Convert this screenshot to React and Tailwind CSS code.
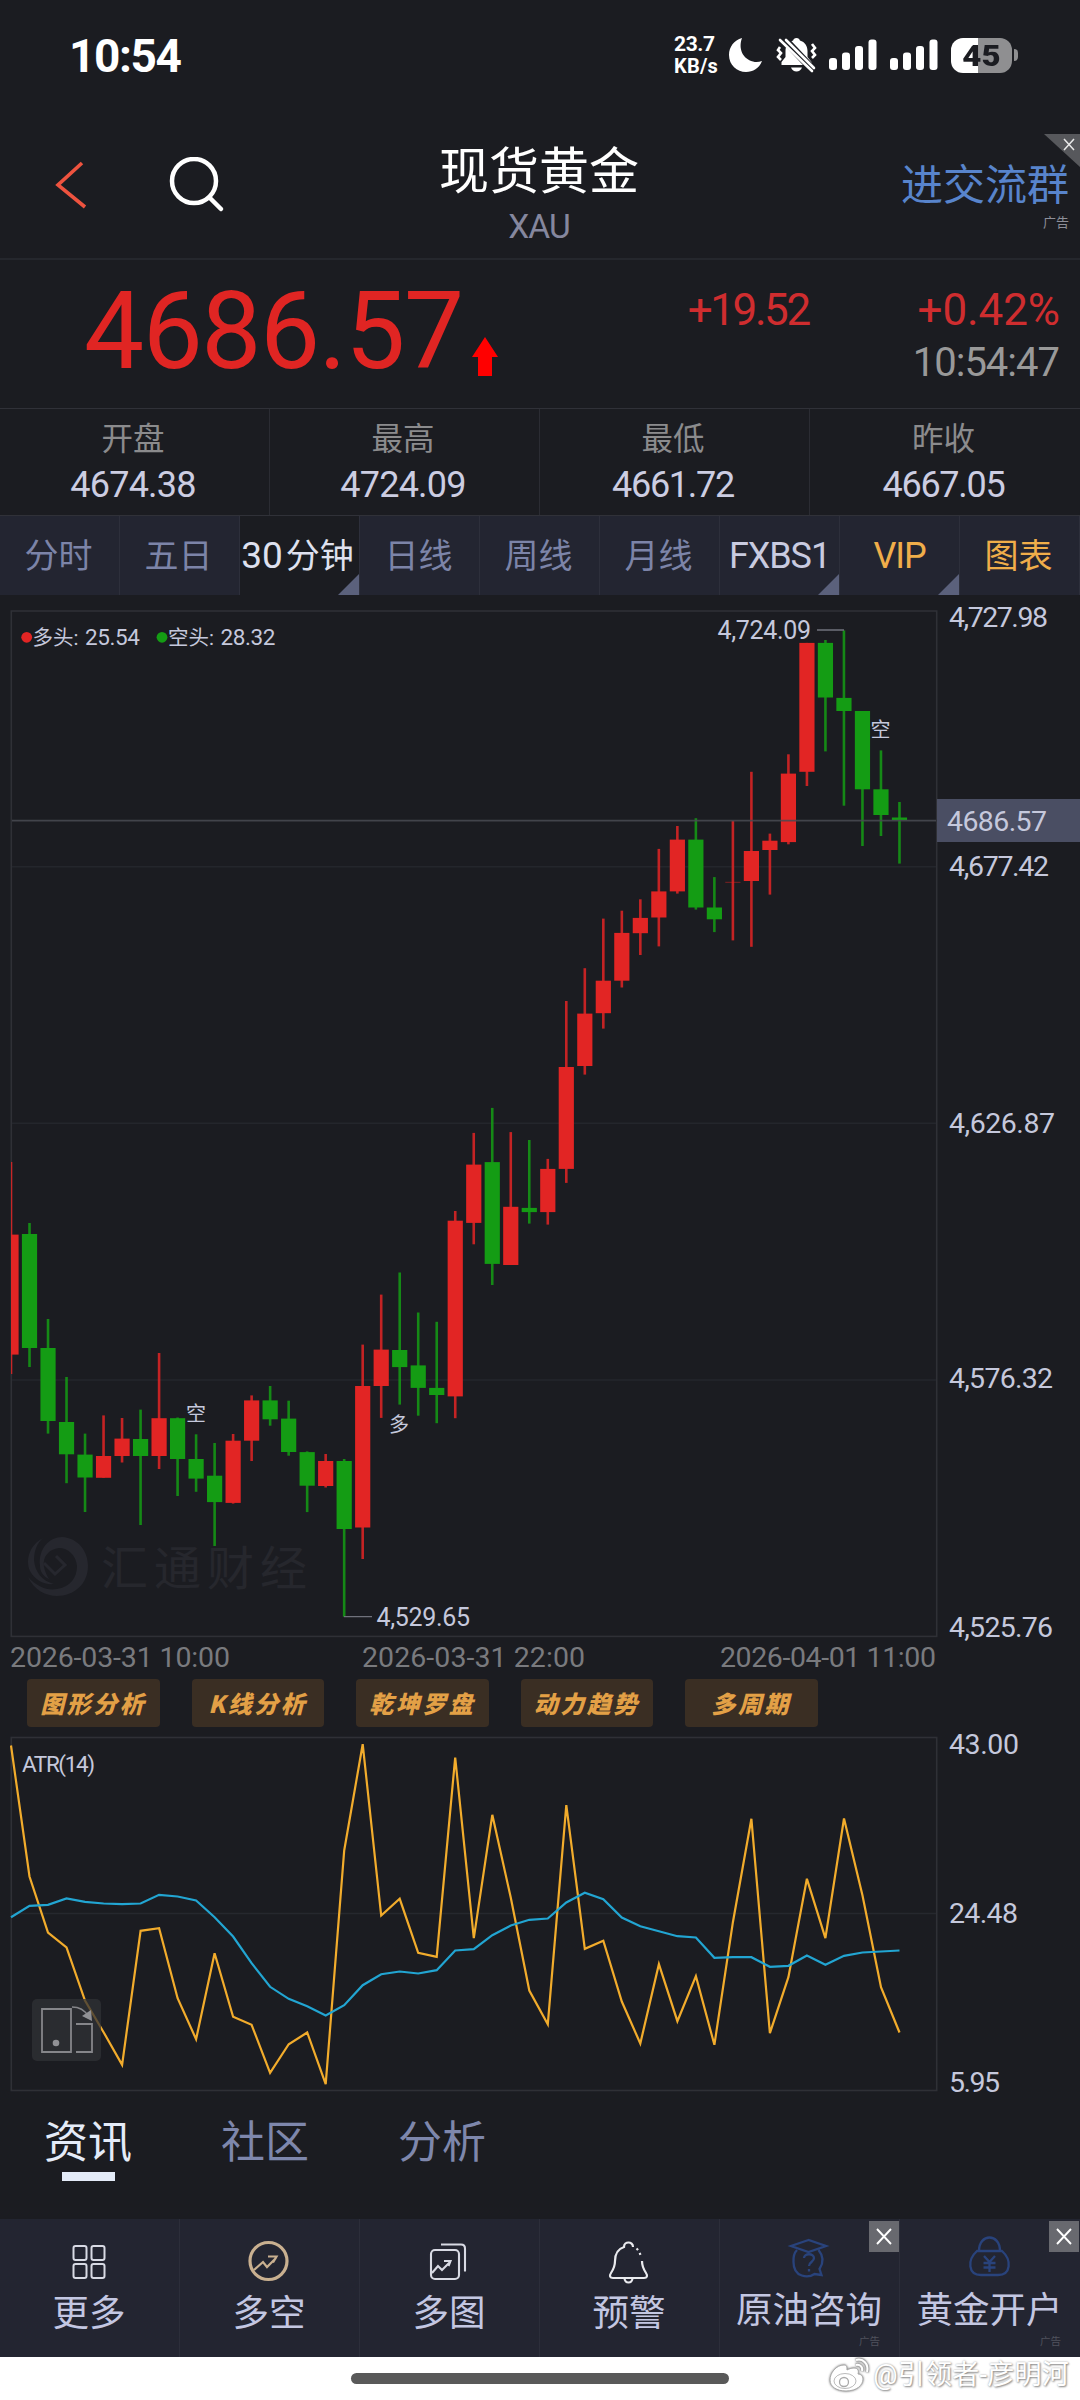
import React from "react";

const FONT = "font-[Roboto,'Noto_Sans_CJK_SC',sans-serif]";
const RED = "#e22524";
const GREEN = "#149c14";
const STEP = 18.51;
const ORIGIN = 11;
const CHART_TOP = 595;

// Each candle: [direction, high, body top, body bottom, low]
const CANDLES = [
  ["r", 1162, 1234.6, 1354.6, 1374], ["g", 1223, 1234, 1348, 1367], ["g", 1319, 1348, 1421, 1433.6],
  ["g", 1377, 1422, 1454.3, 1483.2], ["g", 1433.6, 1454.6, 1477.5, 1512], ["r", 1415.4, 1456, 1477.8, 1477.8],
  ["r", 1418, 1438.6, 1456, 1462.5], ["g", 1409.6, 1439, 1456, 1525], ["r", 1353, 1418.2, 1456, 1469],
  ["g", 1417.5, 1418.2, 1459, 1496], ["g", 1434.3, 1459, 1478.6, 1491.8], ["g", 1443, 1475.7, 1502.1, 1546],
  ["r", 1434, 1440.7, 1502.9, 1503.6], ["r", 1395.4, 1400.4, 1440.7, 1461], ["g", 1386, 1400.4, 1419.3, 1425.7],
  ["g", 1400.7, 1418.6, 1452, 1455.7], ["g", 1451.4, 1452.1, 1485.7, 1512.1], ["r", 1454, 1461, 1486, 1487.5],
  ["g", 1459, 1461, 1529, 1616.8], ["r", 1344.6, 1386, 1527.5, 1559], ["r", 1294.6, 1349.6, 1386, 1417.9],
  ["g", 1272.5, 1350, 1367.1, 1404.6], ["g", 1312.5, 1365.4, 1387.9, 1415.7], ["g", 1321.8, 1387.9, 1395, 1423.2],
  ["r", 1211, 1220.7, 1396.4, 1418.2], ["r", 1132.9, 1164.6, 1222.9, 1244.3], ["g", 1107.9, 1162.1, 1263.9, 1285],
  ["r", 1132.1, 1206.8, 1265, 1265], ["g", 1140, 1207.9, 1212.1, 1223.6], ["r", 1158.9, 1168.9, 1212.1, 1224.6],
  ["r", 1001, 1067, 1168.9, 1182.9], ["r", 968.2, 1013.6, 1066, 1074.6], ["r", 918.6, 980.7, 1013.2, 1028.6],
  ["r", 910.7, 932.9, 980.7, 987.5], ["r", 899.3, 917.9, 933.2, 955], ["r", 848.9, 891.4, 917.5, 946.4],
  ["r", 826, 839.6, 891.4, 893.6], ["g", 818.2, 839.6, 907.5, 909.6], ["g", 877.1, 907.5, 919.3, 932.1],
  ["r", 820.7, 881.8, 882.6, 940.4], ["r", 771.8, 851, 881, 946.8], ["r", 833.6, 840.7, 850, 894.6],
  ["r", 754.3, 773.6, 842.1, 844.3], ["r", 642.9, 642.9, 771.8, 786], ["g", 640, 642.9, 697.5, 751.4],
  ["g", 630.4, 697.9, 711, 805.7], ["g", 711, 711, 789.3, 846], ["g", 750.4, 789.3, 815, 836],
  ["g", 802, 817.5, 820, 863.6],
];

// Indicator series, three units to the pixel, measured from above the panel
const TRUE_RANGE = [
  375, 768, 936, 981, 1140, 1235, 1333, 931, 923, 1133, 1256, 998, 1189, 1213, 1357, 1271, 1236, 1391, 690, 371,
  885, 835, 997, 1009, 411, 953, 583, 832, 1110, 1211, 554, 985, 961, 1143, 1269, 1031, 1202, 1067, 1273, 905,
  595, 1238, 1070, 775, 953, 594, 825, 1100, 1236,
];
const ATR = [
  890, 856, 853, 834, 844, 849, 851, 849, 823, 828, 840, 890, 948, 1028, 1099, 1135, 1157, 1185, 1154, 1094,
  1061, 1053, 1059, 1049, 990, 986, 944, 915, 898, 894, 846, 817, 836, 891, 917, 932, 947, 951, 1012, 1010,
  1010, 1039, 1036, 1005, 1033, 1006, 996, 993, 990,
];

const toPoints = (s) => s.map((v, i) => `${(ORIGIN + i * STEP).toFixed(1)},${(v / 3 - 117).toFixed(1)}`).join(" ");

function Label({ x, y, size = 28.5, w, fill = "#c5c8dc", children }) {
  return (
    <text x={x} y={y + size * 0.355} fontSize={size} fill={fill} textLength={w} lengthAdjust="spacing">
      {children}
    </text>
  );
}

function Signal() {
  return (
    <svg width="48" height="32" viewBox="0 0 48 32" fill="#fff">
      <rect x="0" y="19" width="8" height="12" rx="3" />
      <rect x="13" y="13.500" width="8" height="17.500" rx="3" />
      <rect x="26" y="7" width="8" height="24" rx="3" />
      <rect x="39.500" y="0.500" width="8" height="30.500" rx="3" />
    </svg>
  );
}

function StatusBar() {
  return (
    <div className="flex h-[110px] items-center pl-[69px] pr-[62px]">
      <div className="flex-1 pt-[2px] text-[46px] font-bold tracking-[-0.03em] text-white">10:54</div>
      <div className="w-[43px] text-[21px] font-bold leading-[22px] tracking-[-0.02em] text-white">
        <div>23.7</div>
        <div className="text-[20px] tracking-[0.01em]">KB/s</div>
      </div>
      <svg className="ml-[12px]" width="34" height="36" viewBox="0 0 34 36">
        <path d="M13 1C5 3 0 10 0 18c0 10 8 17 17 17 7 0 13-3.500 16-11-3 1-6 1.500-9 .5C14 22 9 12 13 1z" fill="#fff" />
      </svg>
      <svg className="ml-[13px]" width="41" height="36" viewBox="0 0 41 36">
        <path d="M20.500 1c-2 0-3 1-3.400 2.500C12 5 9.500 9 9.500 14v6l-4 5v3h30v-3l-4-5v-6c0-5-2.500-9-7.600-10.500C23.500 2 22.500 1 20.500 1zM15 30.500h11c-1 2.500-3 4-5.500 4s-4.500-1.500-5.500-4z" fill="#fff" />
        <path d="m4 10-2 3 3 3-3 4 3 3M36 7l3 4-3 3 3 4-3 3" fill="none" stroke="#fff" strokeWidth="2.600" />
        <path d="M7 1l32 34" stroke="#1b1c21" strokeWidth="8" />
        <path d="M4 3l32 31M10 3l28 28" stroke="#fff" strokeWidth="2.600" strokeLinecap="round" />
      </svg>
      <div className="ml-[12px] flex gap-[13px]"><Signal /><Signal /></div>
      <div className="ml-[13px] flex h-[35px] w-[61px] items-center justify-center rounded-[12px] bg-[linear-gradient(to_right,#fff_45%,#8f8f91_45%)] pt-px text-[30px] font-black text-[#1b1c21]">
        <span className="scale-x-110">45</span>
      </div>
      <div className="ml-[2px] h-[12px] w-[4px] rounded-r-full bg-[#8f8f91]" />
    </div>
  );
}

function Header() {
  return (
    <div className="relative flex h-[150px] border-b-2 border-[#25272d]">
      <div className="flex w-[330px] pt-[47px] pl-[54px]">
        <svg width="34" height="54" viewBox="0 0 34 54" fill="none">
          <path d="M28 6 4 28l27 22" stroke="#ee533f" strokeWidth="3.600" />
        </svg>
        <svg className="ml-[81px]" width="56" height="56" viewBox="0 0 56 56" fill="none" stroke="#fff" strokeWidth="4.500" strokeLinecap="round">
          <circle cx="25" cy="24" r="22" />
          <path d="m41 41 11 11" />
        </svg>
      </div>
      <div className="flex w-[420px] flex-col items-center pt-[32px] pr-[2px]">
        <div className="text-[50px] leading-[60px] text-white">现货黄金</div>
        <div className="mt-[5px] text-[33.500px] leading-[40px] tracking-[-0.03em] text-[#85879e]">XAU</div>
      </div>
      <div className="flex w-[330px] flex-col items-end pt-[51px] pr-[11px]">
        <div className="text-[42px] leading-[50px] text-[#5884cc]">进交流群</div>
        <div className="mt-[4px] text-[13px] leading-[16px] text-[#8d8e98]">广告</div>
      </div>
      <svg className="absolute right-0 top-[24px]" width="36" height="34" viewBox="0 0 36 34">
        <path d="M0 0h36v33z" fill="#57585c" />
        <path d="m20 5 10 11M30 5 20 16" stroke="#e8e8e8" strokeWidth="1.500" />
      </svg>
    </div>
  );
}

function Quote() {
  return (
    <div className="flex h-[148px] pl-[84px] pr-[21px]">
      <div className="pt-[14px] text-[107px] leading-[116px] tracking-[-0.014em] text-[#e02523]">4686.57</div>
      <svg className="ml-[9px] mt-[77px]" width="26" height="40" viewBox="0 0 26 40">
        <path d="M13 0 0 20h6v19h14V20h6z" fill="#ff0000" />
      </svg>
      <div className="flex flex-1 justify-end pt-[22px] text-[44px] leading-[56px] text-[#cf2d2f]">
        <div className="mr-[104px] tracking-[-0.055em]">+19.52</div>
        <div className="text-right">
          <div className="-mr-px tracking-[-0.002em]">+0.42%</div>
          <div className="text-[40px] leading-[50px] tracking-[-0.025em] text-[#999]">10:54:47</div>
        </div>
      </div>
    </div>
  );
}

function Stats() {
  const rows = [["开盘", "4674.38"], ["最高", "4724.09"], ["最低", "4661.72"], ["昨收", "4667.05"]];
  return (
    <div className="grid h-[108px] grid-cols-4 border-y border-[#303138]">
      {rows.map(([k, v], i) => (
        <div key={k} className={`flex flex-col items-center pt-[9px] pr-[3px] ${i < 3 ? "border-r border-[#2b2c33]" : ""}`}>
          <div className="text-[31.500px] leading-[44px] text-[#8b8b8d]">{k}</div>
          <div className={`text-[36px] leading-[46px] text-[#cccde2] ${i < 2 ? "tracking-[-0.022em]" : "tracking-[-0.035em]"}`}>{v}</div>
        </div>
      ))}
    </div>
  );
}

function Periods() {
  const tabs = [
    ["分时", "text-[#7c84a8]"], ["五日", "text-[#7c84a8]"], ["30分钟", "text-[#dfe1ef]", true], ["日线", "text-[#7c84a8]"],
    ["周线", "text-[#7c84a8]"], ["月线", "text-[#7c84a8]"], ["FXBS1", "text-[#c9cbe0]", true], ["VIP", "text-[#f0ae4a]", true], ["图表", "text-[#f0ae4a]"],
  ];
  return (
    <div className="grid h-[79px] grid-cols-9">
      {tabs.map(([name, color, more], i) => (
        <div key={name} className={`relative flex items-center justify-center whitespace-nowrap border-r border-[#2d2f3b] pt-px text-[34px] ${color} ${i === 2 ? "bg-[#1b1c21]" : "bg-[#232531]"}`}>
          <span className={i === 2 ? "-ml-[4px] text-[37px]" : i > 5 && i < 8 ? "text-[36px] tracking-[-0.03em]" : "-ml-[2px]"}>
            {i === 2 ? <>30<span className="ml-[3px] text-[34px]">分钟</span></> : name}
          </span>
          {more && (
            <svg className="absolute bottom-0 right-0" width="21" height="21" viewBox="0 0 21 21">
              <path d="M21 0v21H0z" fill="#5b617c" />
            </svg>
          )}
        </div>
      ))}
    </div>
  );
}

function Candles() {
  return (
    <svg className="block" width="1080" height="1084" viewBox={`0 ${CHART_TOP} 1080 1084`}>
      <defs><clipPath id="plot"><rect x="11" y="611" width="926" height="1026" /></clipPath></defs>
      <path d="M12 866.800H936M12 1123.200H936M12 1380H936" stroke="#24262c" strokeWidth="1.500" />
      <rect x="11.300" y="611" width="925.400" height="1025.400" fill="none" stroke="#2f3036" strokeWidth="1.600" />
      <g fill="#26272e">
        <path d="M40 1566C38 1548 50 1537 62 1537c16 1 26 14 26 29 0 18-14 30-31 30-11 0-23-6-29-19 9 10 20 14 29 12 13-2 20-11 20-23-1-11-9-18-18-18-10 1-17 9-15 19 1 5 3 9 5 12-5-2-9-7-9-13z" />
        <path d="M43 1538c-13 7-18 21-13 33 5 9 14 14 24 13-12-3-19-12-20-24 0-9 3-17 9-22z" />
        <path d="m56 1556 9 9-10 9-11-11" fill="none" stroke="#26272e" strokeWidth="3" />
        <text x="101" y="1585" fontSize="47" letterSpacing="6" fill="#26272d">汇通财经</text>
      </g>
      <g clipPath="url(#plot)">
        {CANDLES.map(([d, hi, top, bot, lo], i) => {
          const x = ORIGIN + i * STEP;
          const c = d === "r" ? RED : GREEN;
          return (
            <g key={i} fill={c}>
              <rect x={x - 1.3} y={hi} width="2.6" height={lo - hi} opacity="0.85" />
              <rect x={x - 7.6} y={top} width="15.2" height={Math.max(bot - top, 1)} opacity={bot - top < 1 ? 0.5 : 1} />
            </g>
          );
        })}
      </g>
      <path d="M12 820.700H936" stroke="#494b53" strokeWidth="1.800" opacity=".85" />
      <path d="M817 630H844M344 1616.600H372" stroke="#70727c" strokeWidth="1.300" />
      <circle cx="26.700" cy="637.300" r="5.400" fill={RED} />
      <circle cx="162" cy="637.300" r="5.400" fill={GREEN} />
      <Label x={32.500} y={637.500} size={20.500}>多头:</Label>
      <Label x={85} y={637} size={22.500} w={55}>25.54</Label>
      <Label x={168} y={637.500} size={20.500}>空头:</Label>
      <Label x={220.500} y={637} size={22.500} w={55}>28.32</Label>
      <Label x={717.500} y={630.500} size={25} w={93.500}>4,724.09</Label>
      <Label x={376.500} y={1617.500} size={25} w={93.500}>4,529.65</Label>
      <Label x={870.500} y={730} size={20}>空</Label>
      <Label x={186} y={1414} size={20}>空</Label>
      <Label x={389} y={1425} size={20}>多</Label>
      <Label x={949} y={617} w={99}>4,727.98</Label>
      <rect x="937" y="799" width="143" height="43" fill="#4a4e63" />
      <Label x={947} y={821} w={100}>4686.57</Label>
      <Label x={949} y={865.500} w={100}>4,677.42</Label>
      <Label x={949} y={1122.500} w={106}>4,626.87</Label>
      <Label x={949} y={1378} w={104}>4,576.32</Label>
      <Label x={949} y={1627} w={104}>4,525.76</Label>
      <Label x={10} y={1656.500} w={220} fill="#797a7e">2026-03-31 10:00</Label>
      <Label x={362} y={1656.500} w={223} fill="#797a7e">2026-03-31 22:00</Label>
      <Label x={720} y={1656.500} w={216} fill="#797a7e">2026-04-01 11:00</Label>
    </svg>
  );
}

function Tools() {
  return (
    <div className="flex h-[58px] gap-[32px] pl-[27px]">
      {["图形分析", "K线分析", "乾坤罗盘", "动力趋势", "多周期"].map((t) => (
        <div key={t} className="flex h-[48px] w-[132.500px] items-center justify-center rounded-[4px] bg-[#3a2e23] text-[24px] font-black italic tracking-[2.500px] text-[#e3a046] [font-family:'Noto_Sans_CJK_SC',sans-serif]">{t}</div>
      ))}
    </div>
  );
}

function Indicator() {
  return (
    <div className="relative h-[360px]">
      <svg className="block overflow-visible" width="1080" height="360" viewBox="0 0 1080 360">
        <path d="M12 176.500H936" stroke="#26282e" strokeWidth="1.500" />
        <rect x="11.300" y="0.500" width="925.400" height="353" fill="none" stroke="#2f3036" strokeWidth="1.600" />
        <g transform="translate(0 .5)" fill="none" strokeWidth="2.200">
          <polyline points={toPoints(TRUE_RANGE)} stroke="#f2ac2c" />
          <polyline points={toPoints(ATR)} stroke="#22a5d2" />
        </g>
        <Label x={22} y={27} size={22.500} w={73}>ATR(14)</Label>
        <Label x={949} y={7} w={70}>43.00</Label>
        <Label x={949} y={176} w={69}>24.48</Label>
        <Label x={949} y={344.500} w={51}>5.95</Label>
      </svg>
      <div className="absolute left-[32px] top-[262px] h-[62px] w-[69px] rounded-[5px] bg-[#303135]/75">
        <svg width="69" height="62" viewBox="0 0 69 62" fill="none" stroke="#85868a" strokeWidth="1.800">
          <path d="M10 10h29v43H10zM44 25h16v28H44" />
          <circle cx="24" cy="44" r="3.300" fill="#909195" stroke="none" />
          <path d="M40 8q11 0 16 9" strokeWidth="1.300" />
          <path d="m50 17 10 5-1-11z" fill="#909195" stroke="none" />
        </svg>
      </div>
    </div>
  );
}

function NewsTabs() {
  return (
    <div className="flex h-[122px] pl-[44px] text-[44px] leading-[56px] text-[#7e87ac]">
      <div className="flex w-[177px] flex-col pt-[18px] text-[#e4ebf8]">
        <span>资讯</span>
        <span className="ml-[18px] mt-px h-[9px] w-[53px] bg-[#e4ebf8]" />
      </div>
      <div className="w-[177px] pt-[18px]">社区</div>
      <div className="pt-[18px]">分析</div>
    </div>
  );
}

const ICONS = {
  more: (
    <g stroke="#d8dae4" strokeWidth="2"><rect x="9.500" y="10" width="13" height="14" rx="2" /><rect x="27.500" y="10" width="13" height="14" rx="2" /><rect x="9.500" y="28" width="13" height="14" rx="2" /><rect x="27.500" y="28" width="13" height="14" rx="2" /></g>
  ),
  longShort: (
    <g stroke="#c9b090"><circle cx="24.500" cy="25" r="18.500" strokeWidth="3.200" /><path d="m10 34 9-8 4 5 9-9M24 20.500h8.500L29 26.500" strokeWidth="2.200" /></g>
  ),
  charts: (
    <g stroke="#d8dae4" strokeWidth="2.100"><rect x="7" y="14" width="28" height="29" rx="4" /><path d="M17 8.500h20q4 0 4 4v23M8 37l6-7 4 4 8-8M20 25h6.500l-2 5" /></g>
  ),
  bell: (
    <g stroke="#e9eaee" strokeWidth="2.200"><path d="M29 11c0-6-9-6-9 0-6 2-9 7-9 14 0 6-2 9-4 12-2 3-1 5 2 5h31c3 0 4-2 2-5-2-3-4-6-4-12M20.500 42c0 6 8 6 8 0" /><path d="M32.500 12.500q3.500 3 4.500 9" strokeDasharray="2.200 3.300" /></g>
  ),
  consult: (
    <g stroke="#29437c" strokeWidth="2.300"><path d="M24.500 4 7 10l17.500 6L42 10zM13 14q-4 4-3.500 12c0 16 15 16 21 12l7 1-2-6c4-6 4-13-1-19" /><path d="M20 22c0-5 10-5 10 0 0 4-5 4-5 8M25 33v2.500" /></g>
  ),
  account: (
    <g stroke="#29437c" strokeWidth="2.300"><path d="M14 15C14-3 35-3 35 15M12 15h25c10 9 9 24-4 24H16C3 39 2 24 12 15zM19 20l5.500 6 5.500-6M24.500 26v10M18.500 27h12M18.500 31.500h12" /></g>
  ),
};

function BottomBar() {
  const items = [["more", "更多"], ["longShort", "多空"], ["charts", "多图"], ["bell", "预警"], ["consult", "原油咨询", true], ["account", "黄金开户", true]];
  return (
    <div className="grid h-[138px] grid-cols-6 bg-[#232531]">
      {items.map(([icon, name, ad], i) => (
        <div key={name} className={`relative flex flex-col items-center pt-[17px] pr-px ${i < 5 ? "border-r border-[#2c2e3a]" : ""}`}>
          <svg width="50" height="50" viewBox="0 0 50 50" fill="none">{ICONS[icon]}</svg>
          <div className={`whitespace-nowrap text-[36.500px] leading-[50px] text-[#c3c7e2] ${ad ? "" : "mt-[3px]"}`}>{name}</div>
          {ad && (
            <>
              <svg className={`absolute top-[2px] ${i === 5 ? "right-px" : "right-0"}`} width="30" height="31" viewBox="0 0 30 31">
                <path d="M0 0h30v31H0z" fill="#68696f" />
                <path d="m8 8 14 15M22 8 8 23" stroke="#fff" strokeWidth="1.900" />
              </svg>
              <span className="absolute bottom-[8px] right-[19px] text-[10.500px] leading-[14px] text-[#50525d]">广告</span>
            </>
          )}
        </div>
      ))}
    </div>
  );
}

function HomeBar() {
  return (
    <div className="relative h-[43px] bg-white">
      <div className="mx-auto h-[43px] w-[378px] pt-[16px]"><div className="h-[11px] rounded-full bg-[#595959]" /></div>
      <div className="absolute -top-[2px] right-[11px] flex items-center">
        <svg width="42" height="36" viewBox="0 0 42 36" className="drop-shadow-[0_0_1px_#777]">
          <path d="M16 8C8 8 2 16 2 23c0 7 7 11 16 11 11 0 17-6 17-12 0-3-2-5-5-5 1-3 0-6-4-6-3 0-5 1-7 2 0-3 0-5-3-5z" fill="#fff" stroke="#aaa" strokeWidth="1" />
          <ellipse cx="17" cy="24" rx="11" ry="7.500" fill="none" stroke="#bbb" strokeWidth="1" />
          <circle cx="16" cy="25" r="4.500" fill="none" stroke="#aaa" strokeWidth="1.300" />
          <path d="M28 3c7-2 13 4 11 12M28 8c4-1 7 2 6 6" fill="none" stroke="#aaa" strokeWidth="3.500" />
          <path d="M28 3c7-2 13 4 11 12M28 8c4-1 7 2 6 6" fill="none" stroke="#fff" strokeWidth="2" />
        </svg>
        <span className="ml-[3px] whitespace-nowrap pt-px text-[27px] leading-[38px] tracking-[0.01em] text-white [text-shadow:1px_1px_2px_#888,0_0_2px_#aaa]">@引领者-彦明河</span>
      </div>
    </div>
  );
}

export default function App() {
  return (
    <div className={`h-[2400px] w-[1080px] overflow-hidden bg-[#1b1c21] ${FONT}`}>
      <StatusBar />
      <Header />
      <Quote />
      <Stats />
      <Periods />
      <Candles />
      <Tools />
      <Indicator />
      <NewsTabs />
      <BottomBar />
      <HomeBar />
    </div>
  );
}
